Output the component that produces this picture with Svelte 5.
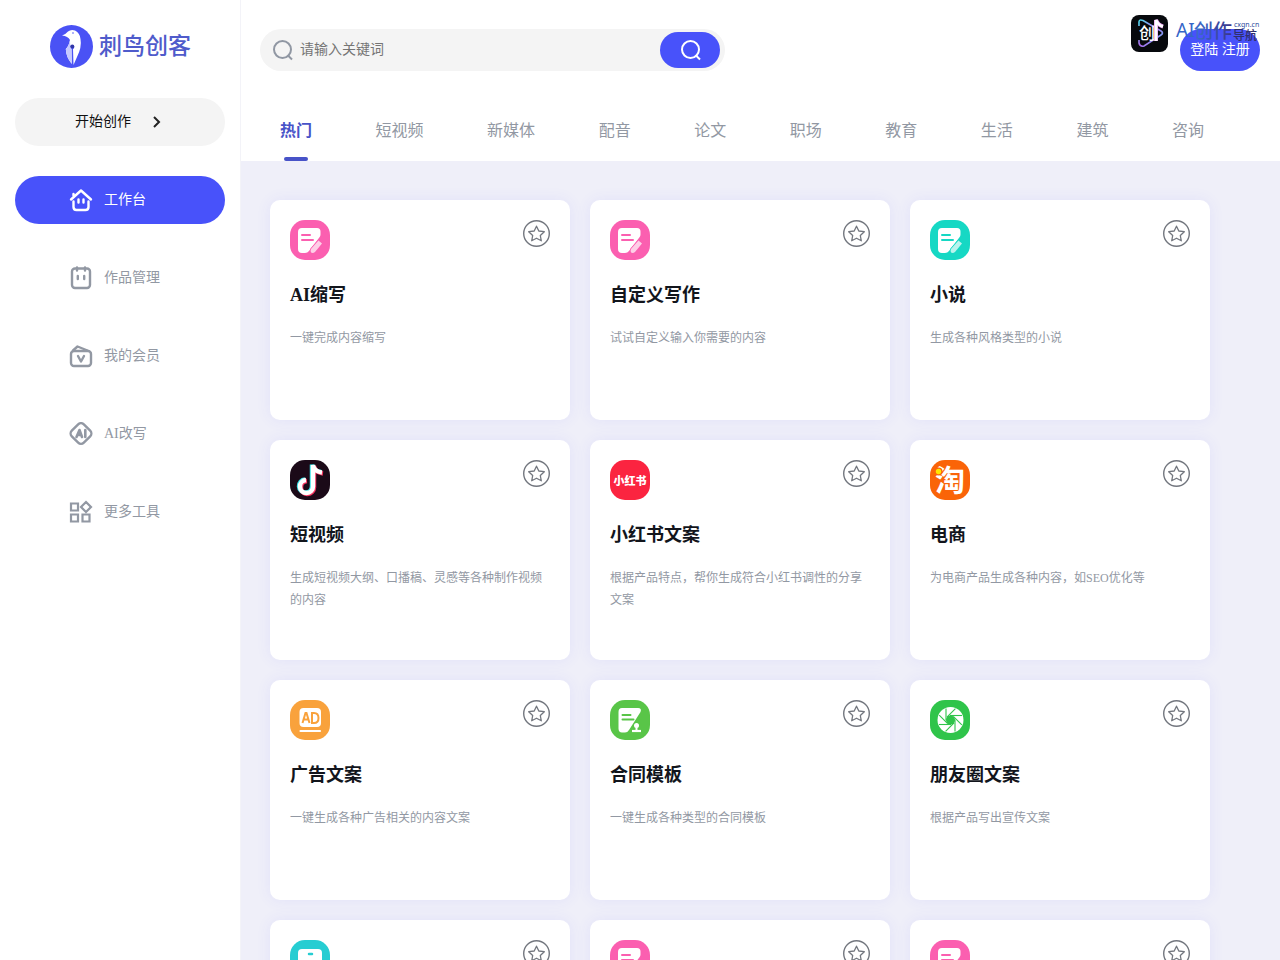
<script>
  let keyword = $state('')
  let active = $state('热门')

  const tabs = ['热门', '短视频', '新媒体', '配音', '论文', '职场', '教育', '生活', '建筑', '咨询']

  const menu = [
    { name: '工作台', icon: 'home' },
    { name: '作品管理', icon: 'works' },
    { name: '我的会员', icon: 'vip' },
    { name: 'AI改写', icon: 'ai' },
    { name: '更多工具', icon: 'more' }
  ]

  const cards = [
    { title: 'AI缩写', desc: '一键完成内容缩写', icon: 'doc', color: '#fb5fb0' },
    { title: '自定义写作', desc: '试试自定义输入你需要的内容', icon: 'doc', color: '#fb5fb0' },
    { title: '小说', desc: '生成各种风格类型的小说', icon: 'doc', color: '#16d8c4' },
    { title: '短视频', desc: '生成短视频大纲、口播稿、灵感等各种制作视频的内容', icon: 'tiktok', color: '#1b0a18' },
    { title: '小红书文案', desc: '根据产品特点，帮你生成符合小红书调性的分享文案', icon: 'red', color: '#fb2440' },
    { title: '电商', desc: '为电商产品生成各种内容，如SEO优化等', icon: 'tao', color: '#fa6408' },
    { title: '广告文案', desc: '一键生成各种广告相关的内容文案', icon: 'ad', color: '#f9a23c' },
    { title: '合同模板', desc: '一键生成各种类型的合同模板', icon: 'contract', color: '#59c548' },
    { title: '朋友圈文案', desc: '根据产品写出宣传文案', icon: 'moments', color: '#2fc44a' },
    { icon: 'screen', color: '#26cdd2' },
    { icon: 'doc', color: '#fb5fb0' },
    { icon: 'doc', color: '#fb5fb0' }
  ]
</script>

<div class="layout">
  <aside>
    <a class="logo" href="#home">
      <svg width="43" height="43" viewBox="0 0 43 43" aria-hidden="true">
        <circle cx="21.5" cy="21.5" r="21.5" fill="#4a52f5" />
        <path d="M12 10.500Q16 9 18 6.500Q21 4 25 5.500Q30 8 30.500 14Q32 22 27 32L23.500 40L23 24A2 2 0 1 0 21.500 24L21.800 39Q16 32 15.800 24Q19 21 20 15Q18 11 12 10.500Z" fill="#fff" />
        <path d="M20 15Q18 23 15.800 24Q16 32 21.800 39L21.500 24Q20 21 20 15Z" fill="#c5c9ff" />
        <circle cx="22.300" cy="21.500" r="2" fill="#3036a8" />
        <circle cx="23" cy="8" r=".8" fill="#4a52f5" />
      </svg>
      <span>刺鸟创客</span>
    </a>

    <button class="start">
      开始创作
      <svg width="10" height="14" viewBox="0 0 10 14" aria-hidden="true">
        <path d="M2 2l5 5-5 5" fill="none" stroke="#222" stroke-width="2" />
      </svg>
    </button>

    <nav>
      {#each menu as item, i}
        <a href="#{item.icon}" class:current={i === 0}>
          <svg width="24" height="24" viewBox="0 0 24 24" fill="none" stroke="currentColor" stroke-width="2.400" stroke-linecap="round" stroke-linejoin="round" aria-hidden="true">
            {#if item.icon === 'home'}
              <path d="M2 11.500L12 2.500l10 9M4.500 7.500V6M4.500 13.500V19q0 3 3 3h9q3 0 3-3v-5.500M9.500 11.500v3M14.500 11.500v3" />
            {:else if item.icon === 'works'}
              <rect x="3" y="2.500" width="18" height="19.500" rx="3" />
              <path d="M8 1.500v3M16 1.500v3M8.800 10v3M15.200 10v3" />
            {:else if item.icon === 'vip'}
              <rect x="2" y="7" width="20" height="15" rx="3" />
              <path d="M4 6.500L8.500 2.500l10 4M9 12l3 5.500 3-5.500" />
            {:else if item.icon === 'ai'}
              <rect x="3.500" y="3" width="17" height="17" rx="4" transform="rotate(45 12 11.500)" />
              <path d="M7.500 15l3-7 2.500 7M9 13h3M16.300 8v7" stroke-width="2.600" />
            {:else}
              <g stroke-width="2.200" stroke-linejoin="miter">
                <path d="M2 3.500h7v7H2zM2 14.500h7v7H2zM13.500 14.500h7v7h-7zM17 2l5 5-5 5-5-5z" />
              </g>
            {/if}
          </svg>
          {item.name}
        </a>
      {/each}
    </nav>
  </aside>

  <main>
    <header>
      <form class="search" onsubmit={e => e.preventDefault()}>
        <svg width="22" height="22" viewBox="0 0 22 22" aria-hidden="true">
          <circle cx="10.500" cy="10.500" r="8.500" fill="none" stroke="#9097a3" stroke-width="2" />
          <path d="M15.500 16l4.500 4.500" stroke="#9097a3" stroke-width="2" />
        </svg>
        <input bind:value={keyword} placeholder="请输入关键词" aria-label="请输入关键词" />
        <button aria-label="搜索">
          <svg width="22" height="22" viewBox="0 0 22 22" aria-hidden="true">
            <circle cx="11.500" cy="10.500" r="8.500" fill="none" stroke="#fff" stroke-width="2" />
            <path d="M16.500 16l4.500 4.500" stroke="#fff" stroke-width="2" />
          </svg>
        </button>
      </form>
      <button class="login">登陆 注册</button>

      <div class="mark">
        <svg width="130" height="40" viewBox="0 0 130 40">
          <defs>
            <linearGradient id="neon" x1="0" y1="0" x2="1" y2="1">
              <stop offset="0" stop-color="#4fe0f0" />
              <stop offset=".5" stop-color="#b06af0" />
              <stop offset="1" stop-color="#5cc4f0" />
            </linearGradient>
            <linearGradient id="ink" x1="0" y1="0" x2="1" y2="0">
              <stop offset="0" stop-color="#3b6fd0" />
              <stop offset="1" stop-color="#3a3488" />
            </linearGradient>
          </defs>
          <rect x="1" y="1" width="37" height="37" rx="8" fill="#07090d" />
          <path d="M9 12V8q0-3 4-1.500L31 17q3 2 0 4L14 32q-4 1-5-3v-3" fill="none" stroke="url(#neon)" stroke-width="1.600" />
          <path d="M26 27V6q2 5 7 6.500" fill="none" stroke="#e9a1f0" stroke-width="4" />
          <path d="M26 27V6q2 5 7 6.500" fill="none" stroke="#fff" stroke-width="2.600" />
          <text x="9" y="25" font-size="16" font-weight="500" fill="#fff">创</text>
          <text class="ai" x="46" y="23" font-size="19" fill="#3566c8">AI</text>
          <text x="64" y="24" font-size="19" font-weight="500" fill="url(#ink)">创作</text>
          <text class="ai" x="104" y="13" font-size="7" fill="#2c4a9c">cxgn.cn</text>
          <text x="103" y="26" font-size="12" font-weight="500" fill="#302f6b">导航</text>
        </svg>
      </div>
    </header>

    <div class="tabs" role="tablist">
      {#each tabs as tab}
        <button role="tab" aria-selected={active === tab} class:active={active === tab} onclick={() => (active = tab)}>{tab}</button>
      {/each}
    </div>

    <section class="cards">
      {#each cards as card}
        <article>
          <div class="top">
            <svg width="40" height="40" viewBox="0 0 40 40" aria-hidden="true">
              <rect width="40" height="40" rx="15" fill={card.color} />
              {#if card.icon === 'doc'}
                <path d="M12 8h15q3.500 0 3.500 3.500v3q0 1.500-1 2.800L19 31q-1.500 2-4 2h-3q-4 0-4-4V12q0-4 4-4z" fill="#fff" />
                <path d="M12 15h8M12 20h11" stroke={card.color} stroke-width="2" stroke-linecap="round" />
                <path d="M28.500 20.500l3.500 3-7 8.500q-2 1.500-4 .5-.8-2 0-3.500z" fill={card.color} stroke={card.color} stroke-width="1.500" />
                <path d="M28.500 20.500l3.500 3-7 8.500q-2 1.500-4 .5-.8-2 0-3.500z" fill="#fff" opacity=".7" />
              {:else if card.icon === 'tiktok'}
                <g fill="none" stroke-width="4.500">
                  <path d="M16 20a6.500 6.500 0 1 0 7 6.500V5q1 6.500 9 7.500" transform="translate(-1 -.5)" stroke="#35e2e6" />
                  <path d="M16 20a6.500 6.500 0 1 0 7 6.500V5q1 6.500 9 7.500" transform="translate(1 1)" stroke="#f5335f" />
                  <path d="M16 20a6.500 6.500 0 1 0 7 6.500V5q1 6.500 9 7.500" stroke="#fff" />
                </g>
              {:else if card.icon === 'red'}
                <text x="20" y="25" font-size="11" font-weight="900" text-anchor="middle" fill="#fff">小红书</text>
              {:else if card.icon === 'tao'}
                <text x="5" y="31" font-size="30" font-weight="700" fill="#fff">淘</text>
                <circle cx="8.500" cy="11.500" r="4" fill={card.color} />
                <circle cx="8.500" cy="11.500" r="2.700" fill="#ffe600" />
              {:else if card.icon === 'ad'}
                <rect x="9.500" y="8" width="21.500" height="19" rx="4" fill="#fff" />
                <path d="M12.500 23l3-10h1l3 10M13.500 19.500h5M22 13v10h2q4.500 0 4.500-5t-4.500-5z" fill="none" stroke={card.color} stroke-width="2" />
                <path d="M10.500 31h19.500" stroke="#fff" stroke-width="2.200" stroke-linecap="round" />
              {:else if card.icon === 'contract'}
                <path d="M12 8h16q4 0 2.500 4L19 30q-1.500 2.500-4 2.500h-3q-3.500 0-3.500-4V12q0-4 3.500-4z" fill="#fff" />
                <path d="M12.500 15h8M12.500 19.500h11" stroke={card.color} stroke-width="2" stroke-linecap="round" />
                <circle cx="26.500" cy="25.500" r="2.500" fill="#fff" />
                <path d="M26.500 25v6" stroke="#fff" stroke-width="2" />
                <path d="M22 31h9" stroke="#fff" stroke-width="2.200" />
              {:else if card.icon === 'moments'}
                <circle cx="20.500" cy="20" r="13" fill="#fff" />
                <circle cx="20.500" cy="20" r="4.500" fill={card.color} />
                {#each [0, 45, 90, 135, 180, 225, 270, 315] as angle}
                  <path d="M16 20.500V8.500" stroke={card.color} stroke-width="1.100" transform="rotate({angle} 20.500 20)" />
                {/each}
              {:else}
                <rect x="8" y="9" width="24" height="22" rx="4" fill="#fff" />
                <path d="M19 14h3" stroke={card.color} stroke-width="2.500" stroke-linecap="round" />
              {/if}
            </svg>
            <button class="star" aria-label="收藏">
              <svg width="27" height="27" viewBox="0 0 27 27" fill="none" stroke="#73777f" aria-hidden="true">
                <circle cx="13.500" cy="13.500" r="12.800" stroke-width="1.400" />
                <path d="M13.500 6.200l2.300 4.800 5.500.7-4 3.800 1 5.300-4.800-2.600-4.800 2.600 1-5.300-4-3.800 5.500-.7z" stroke-width="1.300" stroke-linejoin="round" />
              </svg>
            </button>
          </div>
          {#if card.title}
            <h3>{card.title}</h3>
            <p>{card.desc}</p>
          {/if}
        </article>
      {/each}
    </section>
  </main>
</div>

<style>
  :global(body) {
    background: #fff;
  }
  .layout {
    display: flex;
    height: 100vh;
    overflow: hidden;
    font-family: "Liberation Serif", "Noto Sans CJK SC", serif;
    font-size: 14px;
    line-height: 20px;
  }
  button,
  input {
    border: 0;
    padding: 0;
    background: none;
    font: inherit;
  }
  button {
    cursor: pointer;
  }
  svg {
    display: block;
    flex: none;
  }
  a {
    text-decoration: none;
  }
  aside {
    box-sizing: border-box;
    flex: none;
    width: 241px;
    padding: 25px 15px;
    border-right: 1px solid #f3f3f8;
  }
  .logo {
    display: flex;
    align-items: center;
    gap: 6px;
    height: 43px;
    margin-left: 35px;
    color: #4f5bcb;
    font-size: 23px;
    font-weight: 500;
    line-height: 24px;
    white-space: nowrap;
  }
  .start {
    display: flex;
    align-items: center;
    gap: 21px;
    width: 210px;
    height: 48px;
    margin-top: 30px;
    padding-left: 60px;
    border-radius: 24px;
    background: #f4f4f4;
    color: #111;
  }
  nav {
    display: flex;
    flex-direction: column;
    gap: 30px;
    margin-top: 30px;
  }
  nav a {
    display: flex;
    align-items: center;
    gap: 11px;
    width: 156px;
    height: 48px;
    padding-left: 54px;
    border-radius: 24px;
    color: #9298a3;
  }
  nav a.current {
    background: #4852fa;
    color: #fff;
  }
  main {
    display: flex;
    flex: 1;
    flex-direction: column;
    min-width: 0;
  }
  header {
    position: relative;
    display: flex;
    flex: none;
    align-items: center;
    justify-content: space-between;
    height: 100px;
    padding: 0 20px 0 19px;
  }
  .search {
    box-sizing: border-box;
    display: flex;
    align-items: center;
    width: 465px;
    height: 42px;
    padding: 0 5px 0 12px;
    border-radius: 21px;
    background: #f4f4f4;
  }
  .search input {
    flex: 1;
    min-width: 0;
    margin-left: 6px;
    outline: none;
  }
  .search input::placeholder {
    color: #757575;
  }
  .search button {
    display: flex;
    align-items: center;
    justify-content: center;
    width: 60px;
    height: 36px;
    border-radius: 18px;
    background: #4852fa;
  }
  .login {
    width: 80px;
    height: 42px;
    border-radius: 21px;
    background: #4852fa;
    color: #fff;
    white-space: nowrap;
  }
  .mark {
    position: absolute;
    top: 14px;
    right: 20px;
    pointer-events: none;
  }
  .mark .ai {
    font-family: "Noto Sans", sans-serif;
  }
  .tabs {
    display: flex;
    flex: none;
    justify-content: space-between;
    height: 61px;
    padding: 0 76px 0 39px;
  }
  .tabs button {
    position: relative;
    color: #9298a3;
    font-size: 16px;
  }
  .tabs .active {
    color: #4853c8;
    font-weight: 700;
  }
  .tabs .active::after {
    content: '';
    position: absolute;
    bottom: 0;
    left: 4px;
    width: 24px;
    height: 4px;
    border-radius: 2px;
    background: #4853c8;
  }
  .cards {
    display: grid;
    flex: 1;
    grid-template-columns: repeat(auto-fill, 300px);
    grid-auto-rows: 220px;
    gap: 20px;
    min-height: 0;
    padding: 39px 29px;
    overflow-y: auto;
    scrollbar-width: none;
    background: #efeff9;
  }
  article {
    box-sizing: border-box;
    padding: 20px;
    border-radius: 10px;
    background: #fff;
    box-shadow: 0 0 15px rgba(72, 82, 250, 0.08);
  }
  .top {
    display: flex;
    align-items: flex-start;
    justify-content: space-between;
  }
  h3 {
    margin: 20px 0 16px;
    color: #12151c;
    font-size: 18px;
    line-height: 31px;
  }
  p {
    margin: 0;
    color: #9298a3;
    font-size: 12px;
    line-height: 22px;
  }
</style>
